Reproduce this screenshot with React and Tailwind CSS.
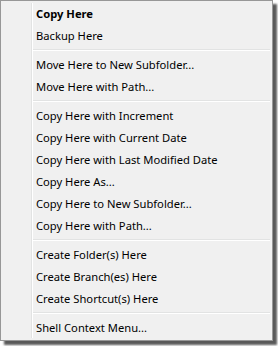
import React from 'react';

const groups = [
  [{ label: 'Copy Here', bold: true }, { label: 'Backup Here' }],
  [{ label: 'Move Here to New Subfolder...' }, { label: 'Move Here with Path...' }],
  [
    { label: 'Copy Here with Increment' },
    { label: 'Copy Here with Current Date' },
    { label: 'Copy Here with Last Modified Date' },
    { label: 'Copy Here As...' },
    { label: 'Copy Here to New Subfolder...' },
    { label: 'Copy Here with Path...' },
  ],
  [
    { label: 'Create Folder(s) Here' },
    { label: 'Create Branch(es) Here' },
    { label: 'Create Shortcut(s) Here' },
  ],
  [{ label: 'Shell Context Menu...' }],
];

const App = () => {
  return (
    <div className="w-[278px] h-[346px] bg-white">
      <div className="relative w-[273px] h-[341px] bg-[#f0f0f0] border border-[#979797] shadow-[4px_4px_2px_rgba(0,0,0,0.65)] pt-[2px] font-['Noto_Sans',sans-serif] text-[11.2px] text-black">
        {/* icon gutter line */}
        <div className="absolute top-[2px] bottom-[2px] left-[30px] w-[2px] border-l border-[#e2e3e3] bg-white" />
        {groups.map((group, gi) => (
          <div key={gi}>
            {gi > 0 && (
              <div className="h-[7px] pt-[2px] pl-[31px] pr-[2px]">
                <div className="h-[2px] border-t border-[#e2e3e3] bg-white" />
              </div>
            )}
            {group.map(item => (
              <div
                key={item.label}
                className={`h-[22px] flex items-center pl-[35px] whitespace-nowrap ${item.bold ? 'font-bold' : ''}`}
              >
                {item.label}
              </div>
            ))}
          </div>
        ))}
      </div>
    </div>
  );
};

export default App;
